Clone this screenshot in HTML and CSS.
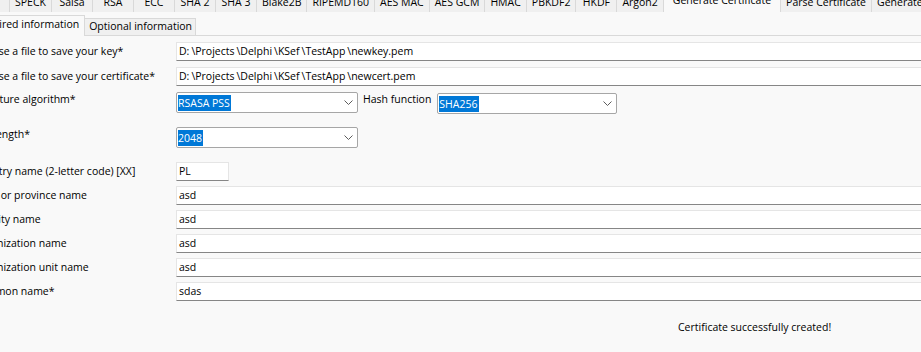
FILE: index.html
```html
<!DOCTYPE html>
<html>
	<head>
		<meta charset="UTF-8">
		<title>Generate Certificate</title>
		<link rel="stylesheet" href="styles.css">
	</head>
	<body>
		<div class="tabs">
			<span class="tab lead"></span>
			<span class="tab">SPECK</span>
			<span class="tab">Salsa</span>
			<span class="tab">RSA</span>
			<span class="tab">ECC</span>
			<span class="tab">SHA 2</span>
			<span class="tab">SHA 3</span>
			<span class="tab">Blake2B</span>
			<span class="tab">RIPEMD160</span>
			<span class="tab">AES MAC</span>
			<span class="tab">AES GCM</span>
			<span class="tab">HMAC</span>
			<span class="tab">PBKDF2</span>
			<span class="tab">HKDF</span>
			<span class="tab">Argon2</span>
			<span class="tab active">Generate Certificate</span>
			<span class="tab">Parse Certificate</span>
			<span class="tab">Generate CSR</span>
		</div>

		<div class="subtabs">
			<span class="subtab active">Required information</span>
			<span class="subtab">Optional information</span>
		</div>

		<div class="form">
			<div class="row file">
				<label>Choose a file to save your key*</label>
				<div class="edit">D:<span class="bs">\</span>Projects<span class="bs">\</span>Delphi<span class="bs">\</span>KSef<span class="bs">\</span>TestApp<span class="bs">\</span>newkey.pem</div>
			</div>
			<div class="row file">
				<label>Choose a file to save your certificate*</label>
				<div class="edit">D:<span class="bs">\</span>Projects<span class="bs">\</span>Delphi<span class="bs">\</span>KSef<span class="bs">\</span>TestApp<span class="bs">\</span>newcert.pem</div>
			</div>
			<div class="row pick">
				<label>Signature algorithm*</label>
				<div class="combo">
					<span class="sel">RSASA PSS</span>
					<svg class="arrow" width="9" height="5" viewBox="0 0 9 5"><polyline points="0.5,0.5 4.5,4.5 8.5,0.5" fill="none" stroke="#5c5c5c" stroke-width="1"/></svg>
				</div>
				<label class="side">Hash function</label>
				<div class="combo hash">
					<span class="sel">SHA256</span>
					<svg class="arrow" width="9" height="5" viewBox="0 0 9 5"><polyline points="0.5,0.5 4.5,4.5 8.5,0.5" fill="none" stroke="#5c5c5c" stroke-width="1"/></svg>
				</div>
			</div>
			<div class="row pick">
				<label>Key length*</label>
				<div class="combo">
					<span class="sel">2048</span>
					<svg class="arrow" width="9" height="5" viewBox="0 0 9 5"><polyline points="0.5,0.5 4.5,4.5 8.5,0.5" fill="none" stroke="#5c5c5c" stroke-width="1"/></svg>
				</div>
			</div>
			<div class="row">
				<label>Country name (2-letter code) [XX]</label>
				<div class="edit short">PL</div>
			</div>
			<div class="row">
				<label>State or province name</label>
				<div class="edit">asd</div>
			</div>
			<div class="row">
				<label>Locality name</label>
				<div class="edit">asd</div>
			</div>
			<div class="row">
				<label>Organization name</label>
				<div class="edit">asd</div>
			</div>
			<div class="row">
				<label>Organization unit name</label>
				<div class="edit">asd</div>
			</div>
			<div class="row">
				<label>Common name*</label>
				<div class="edit">sdas</div>
			</div>
		</div>

		<p class="status">Certificate successfully created!</p>
	</body>
</html>
```

FILE: styles.css
```css
html, body{
	margin: 0;
	padding: 0;
}
body{
	width: 921px;
	height: 352px;
	overflow: hidden;
	background: #f9f9f9;
	color: #000;
	font-family: "Open Sans", "Noto Sans", sans-serif;
	font-size: 10.5px;
}

/* top page control, scrolled so only the lower half shows */
.tabs{
	display: flex;
	margin-top: -8px;
	height: 20px;
	white-space: nowrap;
	overflow: hidden;
}
.tab{
	flex: none;
	min-width: 30px;
	height: 20px;
	line-height: 20px;
	padding: 0 5px;
	text-align: center;
	background: #f0f0f0;
	border-right: 1px solid #d9d9d9;
}
.tab.lead{
	min-width: 0;
	width: 0;
	padding: 0 5px 0 4px;
}
.tab.active{
	background: #f9f9f9;
	line-height: 17px;
	padding: 0 9px;
	border-left: 1px solid #d9d9d9;
	margin-left: -1px;
}

/* inner page control */
.subtabs{
	display: flex;
	align-items: flex-end;
	margin-top: 3px;
	height: 20px;
	border-bottom: 1px solid #d9d9d9;
	white-space: nowrap;
}
.subtab{
	flex: none;
	line-height: 14px;
	padding: 0 3px 2px 4px;
	background: #f0f0f0;
	border: 1px solid #d9d9d9;
	border-bottom: none;
	border-left: none;
}
.subtab.active{
	margin-left: -32px;
	line-height: 16px;
	padding: 0 5px 4px;
	margin-bottom: -1px;
	background: #f9f9f9;
	border-left: 1px solid #d9d9d9;
}

/* form, left part of the labels is scrolled out of view */
.form{
	width: 960px;
	margin-left: -27px;
	padding-top: 6px;
}
.row{
	display: flex;
	align-items: flex-start;
	height: 24px;
}
.row.file{
	height: 25px;
}
.row.pick{
	height: 35px;
}
.row label{
	flex: none;
	width: 203px;
	line-height: 19px;
	white-space: nowrap;
}
.row.pick label{
	line-height: 15px;
}
.row label.side{
	width: auto;
	margin-left: 5px;
	margin-right: 6px;
}
.edit{
	flex: 1;
	box-sizing: border-box;
	height: 19px;
	line-height: 17px;
	padding-left: 2px;
	background: #fff;
	border: 1px solid #e5e5e5;
	border-bottom-color: #868686;
	white-space: nowrap;
}
.edit .bs{
	padding-left: 2px;
}
.edit.short{
	flex: none;
	width: 53px;
}
.combo{
	flex: none;
	display: flex;
	align-items: center;
	justify-content: space-between;
	box-sizing: border-box;
	width: 182px;
	height: 21px;
	padding: 0 4px 0 1px;
	background: #fff;
	border: 1px solid #a6a6a6;
	border-radius: 2px;
}
.combo.hash{
	width: 180px;
	margin-top: 1px;
}
.sel{
	line-height: 16px;
	padding-right: 1px;
	background: #0078d7;
	color: #fff;
}
.arrow{
	display: block;
}

.status{
	margin: 14px 0 0 678px;
	line-height: 15px;
	white-space: nowrap;
}
```
